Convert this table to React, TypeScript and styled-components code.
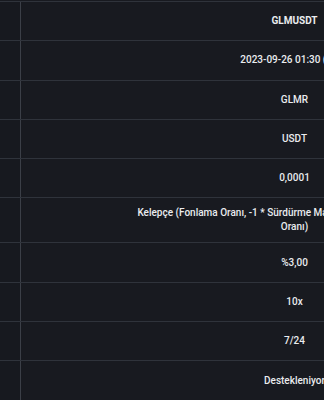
import React from "react";
import styled, { createGlobalStyle } from "styled-components";

const Global = createGlobalStyle`
  html, body { margin: 0; padding: 0; background: #181a20; overflow: hidden; }
  body { font-family: Roboto, "Liberation Sans", sans-serif; }
`;

const Table = styled.div`
  width: 568px;
  padding-top: 1px;
  background: #181a20;
`;

const Row = styled.div<{ $tall?: boolean }>`
  display: grid;
  grid-template-columns: 21px 1fr;
  border-top: 1px solid #2f333b;
  min-height: ${(p) => (p.$tall ? "44px" : "38.3px")};
`;

const LabelCell = styled.div`
  background: #17191f;
  border-right: 1px solid #3b3f47;
`;

const ValueCell = styled.div<{ $bold?: boolean }>`
  display: flex;
  align-items: center;
  justify-content: center;
  text-align: center;
  padding: 7px 0;
  color: #eaecef;
  font-size: 10px;
  line-height: 14px;
  font-weight: ${(p) => (p.$bold ? 700 : 500)};
`;

const Text = styled.span`
  max-width: 320px;
`;

const rows: { v: string; bold?: boolean; tall?: boolean }[] = [
  { v: "GLMUSDT", bold: true },
  { v: "2023-09-26 01:30 (UTC)" },
  { v: "GLMR" },
  { v: "USDT" },
  { v: "0,0001" },
  {
    v: "Kelepçe (Fonlama Oranı, -1 * Sürdürme Marjı Oranı, 1 * Sürdürme Marjı Oranı)",
    tall: true,
  },
  { v: "%3,00" },
  { v: "10x" },
  { v: "7/24" },
  { v: "Destekleniyor" },
];

export default function App() {
  return (
    <>
      <Global />
      <Table>
        {rows.map((r, i) => (
          <Row key={i} $tall={r.tall}>
            <LabelCell />
            <ValueCell $bold={r.bold}>
              <Text>{r.v}</Text>
            </ValueCell>
          </Row>
        ))}
      </Table>
    </>
  );
}
